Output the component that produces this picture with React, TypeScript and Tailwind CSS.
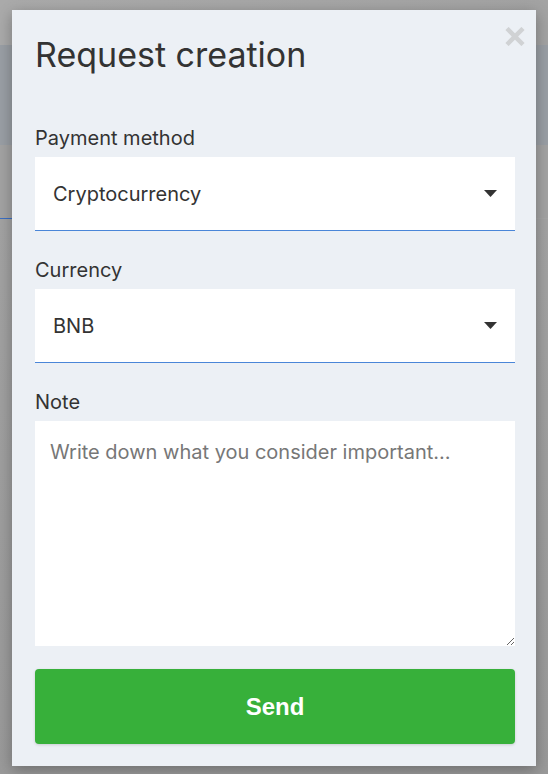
function Caret() {
  return (
    <svg width="13" height="7" viewBox="0 0 13 7" className="shrink-0">
      <path d="M0 0 L13 0 L6.5 7 Z" fill="#333" />
    </svg>
  );
}

function SelectField({ label, value }: { label: string; value: string }) {
  return (
    <div className="mb-[27px]">
      <div className="text-[20px] leading-[24px] text-[#333] mb-[7px]">{label}</div>
      <div className="h-[74px] bg-white border-b border-[#4a86d8] flex items-center justify-between pl-[18px] pr-[18px]">
        <span className="text-[20px] text-[#333]">{value}</span>
        <Caret />
      </div>
    </div>
  );
}

export default function App() {
  return (
    <div className="relative w-[548px] h-[774px] overflow-hidden bg-[#a6a6a6]" style={{ fontFamily: 'Inter, "Noto Sans", sans-serif' }}>
      {/* dimmed page behind */}
      <div className="h-[45px] bg-gradient-to-r from-[#aaaaaa] to-[#a3a3a3]" />
      <div className="h-[100px] bg-[#9a9fa5]" />
      <div className="h-[73px] bg-[#a3a3a3]" />
      <div className="h-px w-[20px] bg-[#3b6fc4]" />
      <div className="h-[555px] bg-gradient-to-b from-[#a3a3a3] to-[#9a9a9a]" />

      {/* modal */}
      <div className="absolute left-[12px] top-[10px] w-[524px] h-[756px] bg-[#ecf0f5] shadow-[0_4px_14px_rgba(0,0,0,0.3)] pl-[23px] pr-[21px] pt-[25px]">
        <button className="absolute right-[11px] top-[17px] text-[#d0d2d4]">
          <svg width="20" height="19" viewBox="0 0 20 19">
            <path d="M2 1.5 L18 17.5 M18 1.5 L2 17.5" stroke="currentColor" strokeWidth="4.5" strokeLinecap="butt" />
          </svg>
        </button>
        <h2 className="text-[34px] leading-[40px] text-[#333] font-normal">Request creation</h2>
        <div className="h-[51px]" />
        <SelectField label="Payment method" value="Cryptocurrency" />
        <SelectField label="Currency" value="BNB" />
        <div>
          <div className="text-[20px] leading-[24px] text-[#333] mb-[7px]">Note</div>
          <textarea
            className="block w-full h-[225px] bg-white px-[15px] py-[16px] text-[20px] text-[#333] placeholder:text-[#777] outline-none"
            placeholder="Write down what you consider important…"
          />
        </div>
        <button
          className="mt-[23px] w-full h-[75px] rounded-[4px] bg-[#37b03a] text-white text-[24px] font-bold shadow-[0_1px_3px_rgba(0,0,0,0.15)]"
          style={{ fontFamily: '"Liberation Sans", Arial, sans-serif' }}
        >
          Send
        </button>
      </div>
    </div>
  );
}
